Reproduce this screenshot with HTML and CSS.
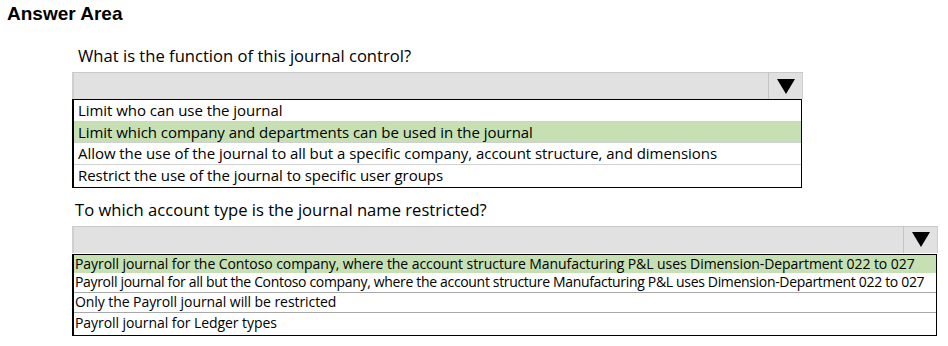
FILE: index.html
```html
<!DOCTYPE html>
<html>
<head>
<meta charset="utf-8">
<link rel="stylesheet" href="styles.css">
</head>
<body>
<div class="page">
  <h1 class="title">Answer Area</h1>
  <div class="block q1">
    <p class="question">What is the function of this journal control?</p>
    <div class="dropdown">
      <div class="field"></div>
      <div class="btn"><span class="tri"></span></div>
    </div>
    <ul class="list">
      <li class="opt">Limit who can use the journal</li>
      <li class="opt sel">Limit which company and departments can be used in the journal</li>
      <li class="opt">Allow the use of the journal to all but a specific company, account structure, and dimensions</li>
      <li class="opt">Restrict the use of the journal to specific user groups</li>
    </ul>
  </div>
  <div class="block q2">
    <p class="question">To which account type is the journal name restricted?</p>
    <div class="dropdown">
      <div class="field"></div>
      <div class="btn"><span class="tri"></span></div>
    </div>
    <ul class="list">
      <li class="opt sel">Payroll journal for the Contoso company, where the account structure Manufacturing P&amp;L uses Dimension-Department 022 to 027</li>
      <li class="opt tight">Payroll journal for all but the Contoso company, where the account structure Manufacturing P&amp;L uses Dimension-Department 022 to 027</li>
      <li class="opt">Only the Payroll journal will be restricted</li>
      <li class="opt">Payroll journal for Ledger types</li>
    </ul>
  </div>
</div>
</body>
</html>
```
FILE: styles.css
```css
html, body {
  margin: 0;
  padding: 0;
  background: #ffffff;
}
.page {
  width: 948px;
  height: 346px;
  position: relative;
  font-family: "Open Sans", "Noto Sans", sans-serif;
  color: #000;
}
.title {
  margin: 0;
  padding: 3px 0 0 7px;
  font-family: "Liberation Sans", Arial, sans-serif;
  font-weight: bold;
  font-size: 19px;
  line-height: 21px;
}
.block {
  margin-left: 72px;
}
.question {
  margin: 0;
  font-size: 16.6px;
  line-height: 22px;
  padding-left: 6px;
}
.q1 {
  width: 731px;
  padding-top: 21px;
}
.q1 .question { height: 27px; }
.q2 {
  width: 866px;
  padding-top: 11px;
}
.q2 .question { height: 27px; padding-left: 3px; }
.dropdown {
  display: flex;
  height: 27px;
  background: #e1e1e1;
  border-top: 1px solid #c9c9c9;
  border-left: 2px solid #cfcfcf;
  border-right: 1px solid #cfcfcf;
  box-sizing: border-box;
}
.field {
  flex: 1;
}
.btn {
  width: 33px;
  border-left: 1px solid #c4c4c4;
  display: flex;
  align-items: center;
  justify-content: center;
}
.tri {
  width: 0;
  height: 0;
  border-left: 9px solid transparent;
  border-right: 9px solid transparent;
  border-top: 15px solid #000;
}
.list {
  list-style: none;
  margin: 0;
  padding: 0;
  border: 1.5px solid #000;
  border-left-width: 2px;
  box-sizing: border-box;
}
.q1 .list { width: 730px; }
.q2 .list { width: 865px; margin-top: 1px; }
.opt {
  white-space: nowrap;
  box-sizing: border-box;
}
.q1 .opt {
  font-size: 15px;
  letter-spacing: -0.05px;
  padding-left: 4px;
  height: 21.5px;
  line-height: 21px;
  border-bottom: 1px solid #d0d0d0;
}
.q1 .opt:last-child { border-bottom: none; height: 22px; }
.q2 .opt {
  font-size: 14px;
  letter-spacing: -0.07px;
  height: 20px;
  line-height: 18px;
  border-bottom: 1px solid #a8a8a8;
  padding-left: 1px;
}
.q2 .opt:first-child { height: 18px; line-height: 17px; border-bottom: none; }
.q2 .opt:last-child { border-bottom: none; height: 22px; line-height: 19px; }
.sel {
  background: #c6e0b4;
}
.q2 .tight {
  letter-spacing: -0.33px;
}
```
